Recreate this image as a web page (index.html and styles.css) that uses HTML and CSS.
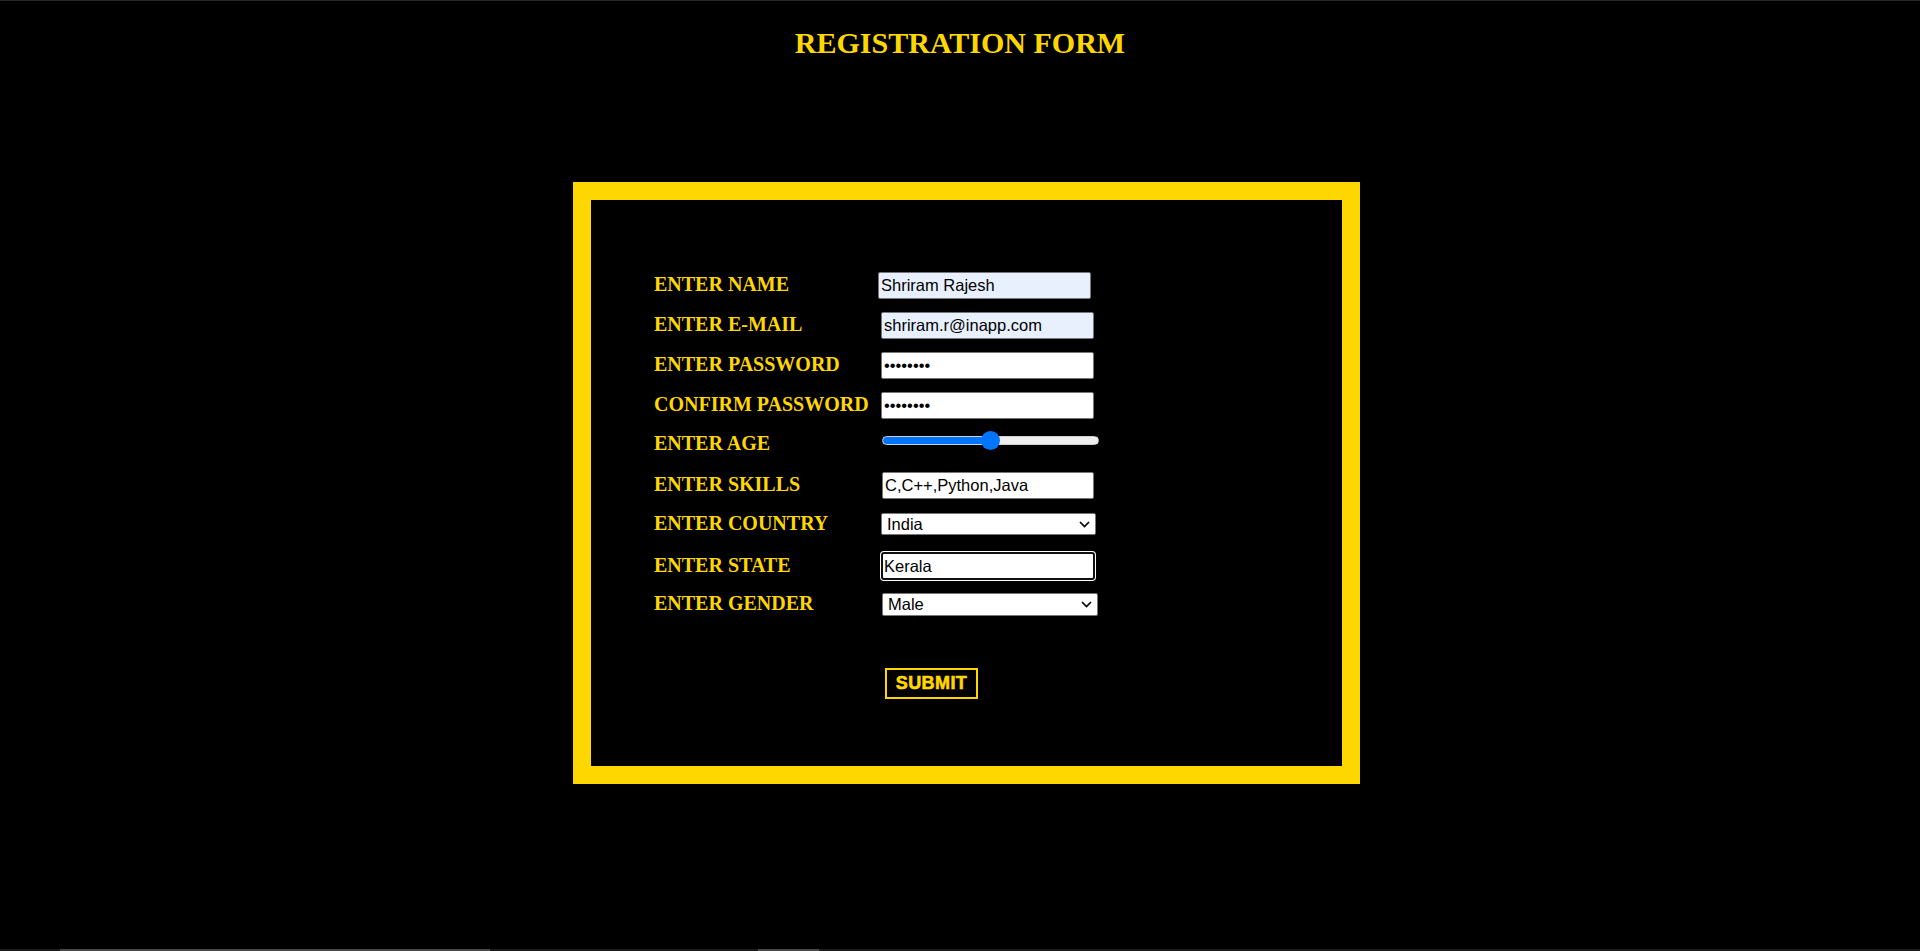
FILE: index.html
```html
<!DOCTYPE html>
<html lang="en">
<head>
<meta charset="utf-8">
<title>Registration Form</title>
<link rel="stylesheet" href="styles.css">
</head>
<body>
<div class="page">
  <h1 class="title">REGISTRATION FORM</h1>
  <form class="frame">
    <div class="rows">
      <div class="row">
        <label class="label" for="name">ENTER NAME</label>
        <input class="field field--autofill field--shift" id="name" type="text" value="Shriram Rajesh">
      </div>
      <div class="row">
        <label class="label" for="email">ENTER E-MAIL</label>
        <input class="field field--autofill" id="email" type="email" value="shriram.r@inapp.com">
      </div>
      <div class="row">
        <label class="label" for="pw">ENTER PASSWORD</label>
        <input class="field" id="pw" type="password" value="abcdefgh">
      </div>
      <div class="row">
        <label class="label" for="cpw">CONFIRM PASSWORD</label>
        <input class="field" id="cpw" type="password" value="abcdefgh">
      </div>
      <div class="row">
        <label class="label" for="age">ENTER AGE</label>
        <input class="range" id="age" type="range" min="0" max="100" value="50">
      </div>
      <div class="row">
        <label class="label" for="skills">ENTER SKILLS</label>
        <input class="field field--skills" id="skills" type="text" value="C,C++,Python,Java">
      </div>
      <div class="row">
        <label class="label" for="country">ENTER COUNTRY</label>
        <span class="select-wrap">
          <select class="select" id="country">
            <option>India</option>
          </select>
          <svg class="chevron" width="11" height="7" viewBox="0 0 11 7"><path d="M1 1 L5.5 5.5 L10 1" fill="none" stroke="#000" stroke-width="1.6"/></svg>
        </span>
      </div>
      <div class="row">
        <label class="label" for="state">ENTER STATE</label>
        <input class="field field--focus" id="state" type="text" value="Kerala">
      </div>
      <div class="row">
        <label class="label" for="gender">ENTER GENDER</label>
        <span class="select-wrap select-wrap--gender">
          <select class="select select--gender" id="gender">
            <option>Male</option>
          </select>
          <svg class="chevron" width="11" height="7" viewBox="0 0 11 7"><path d="M1 1 L5.5 5.5 L10 1" fill="none" stroke="#000" stroke-width="1.6"/></svg>
        </span>
      </div>
    </div>
    <div class="actions">
      <button class="submit" type="button">SUBMIT</button>
    </div>
  </form>
  <div class="strip">
    <span class="strip-bar strip-bar--long"></span>
    <span class="strip-bar strip-bar--short"></span>
  </div>
</div>
</body>
</html>
```

FILE: styles.css
```css
html, body {
  margin: 0;
  padding: 0;
  background: #000;
}

.page {
  min-height: 100vh;
  display: flex;
  flex-direction: column;
  border-top: 1px solid #262626;
  box-sizing: border-box;
}

.title {
  margin: 25px 0 0;
  font-family: "Liberation Serif", "Times New Roman", serif;
  font-weight: bold;
  font-size: 30px;
  line-height: 33px;
  color: #ffd700;
  text-align: center;
}

.frame {
  margin: 123px 0 0 573px;
  width: 688px;
  height: 494px;
  border: 18px solid #ffd700;
  background: #000;
  padding: 72px 0 0 63px;
  box-sizing: content-box;
  display: flex;
  flex-direction: column;
}

.rows {
  display: flex;
  flex-direction: column;
}

.row {
  display: flex;
  align-items: baseline;
  height: 40px;
}

.label {
  width: 227px;
  flex: none;
  font-family: "Liberation Serif", "Times New Roman", serif;
  font-weight: bold;
  font-size: 20px;
  color: #ffd700;
}

.field {
  box-sizing: border-box;
  width: 213px;
  height: 27px;
  margin: 0;
  padding: 1px 2px;
  border: 1px solid #767676;
  border-radius: 2px;
  background: #fff;
  color: #000;
  font-family: "Liberation Sans", Arial, sans-serif;
  font-size: 16.5px;
  outline: none;
}

.field--autofill {
  background: #e8f0fe;
}

.field--shift {
  margin-left: -3px;
}

.field--skills {
  width: 212px;
  margin-left: 1px;
}

.field--focus {
  width: 214px;
  height: 28px;
  border: 2px solid #101010;
  border-radius: 3px;
  box-shadow: 0 0 0 1px #ffffff;
  padding: 0 1px;
}

.range {
  -webkit-appearance: none;
  appearance: none;
  align-self: flex-start;
  width: 217px;
  height: 9px;
  margin: 4px 0 0 1px;
  border-radius: 5px;
  border: 1px solid #d0d0d0;
  box-sizing: border-box;
  background: linear-gradient(to right, #0075ff 0, #0075ff 50%, #efefef 50%, #efefef 100%);
}

.range::-webkit-slider-thumb {
  -webkit-appearance: none;
  appearance: none;
  width: 19px;
  height: 19px;
  border-radius: 50%;
  background: #0075ff;
  border: none;
}

.select-wrap {
  position: relative;
  display: inline-block;
}

.select-wrap--gender {
  margin-left: 1px;
}

.select {
  -webkit-appearance: none;
  appearance: none;
  box-sizing: border-box;
  width: 215px;
  height: 22px;
  margin: 0;
  padding: 0 20px 0 5px;
  border: 1px solid #767676;
  border-radius: 2px;
  background-color: #fff;
  color: #000;
  font-family: "Liberation Sans", Arial, sans-serif;
  font-size: 16.5px;
  line-height: 20px;
}

.select--gender {
  width: 216px;
  height: 23px;
}

.chevron {
  position: absolute;
  right: 6px;
  top: 50%;
  margin-top: -3px;
  pointer-events: none;
}

.actions {
  margin-top: 36px;
  padding-left: 231px;
}

.submit {
  box-sizing: border-box;
  width: 93px;
  height: 31px;
  padding: 0;
  border: 2px solid #ffd700;
  background: #000;
  color: #ffd700;
  font-family: "Liberation Sans", Arial, sans-serif;
  font-weight: bold;
  font-size: 18px;
  letter-spacing: 0.4px;
  -webkit-text-stroke: 0.6px #ffd700;
  cursor: pointer;
}

.strip {
  margin-top: auto;
  height: 2px;
  background: #1a1a1a;
  display: flex;
}

.strip-bar {
  height: 2px;
  background: #4a4a4a;
}

.strip-bar--long {
  margin-left: 60px;
  width: 430px;
}

.strip-bar--short {
  margin-left: 268px;
  width: 61px;
}
```
